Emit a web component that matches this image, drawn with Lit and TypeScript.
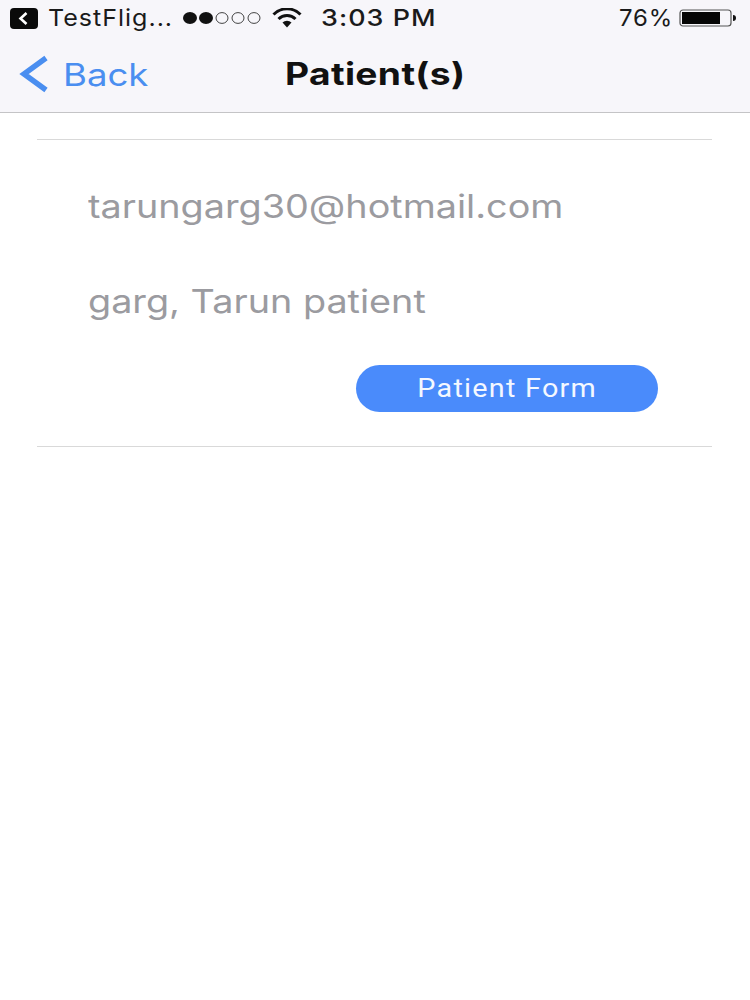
import { LitElement, html, css } from "lit";
import { customElement } from "lit/decorators.js";

@customElement("app-root")
export class AppRoot extends LitElement {
  static styles = css`
    :host { display: block; width: 750px; height: 1000px; background: #fff; font-family: "Inter", "Liberation Sans", sans-serif; overflow: hidden; }
    .top { background: #f7f6fa; height: 112px; border-bottom: 1px solid #c4c4c6; box-sizing: content-box; }
    .status { height: 36px; display: flex; align-items: center; padding: 0 13px 0 10px; color: #1a1a1a; font-size: 23px; letter-spacing: 0.9px; }
    .app { width: 28px; height: 21px; display: block; margin-right: 10px; }
    .carrier { width: 126px; white-space: nowrap; transform: scaleX(1.09); transform-origin: left center; }
    .dots { width: 80px; height: 14px; display: block; margin-left: 9px; }
    .wifi { width: 30px; height: 20px; display: block; margin-left: 9px; }
    .time { margin-left: 19px; font-weight: 500; transform: scaleX(1.17); transform-origin: left center; }
    .right { margin-left: auto; display: flex; align-items: center; gap: 8px; }
    .pct { transform: scaleX(1.04); transform-origin: left center; }
    .batt { width: 58px; height: 20px; display: block; }
    .nav { height: 76px; display: grid; grid-template-columns: 1fr auto 1fr; align-items: center; padding: 0 19px; }
    .back { display: flex; align-items: center; gap: 14px; color: #4a8ef0; font-size: 31px; }
    .back span { transform: scaleX(1.18); transform-origin: left center; }
    .chev { width: 30px; height: 38px; display: block; }
    .title { font-size: 31px; font-weight: 700; color: #111; letter-spacing: 0.3px; transform: scaleX(1.2); margin-top: -2px; }
    .card { margin: 26px 38px 0 37px; border-top: 1px solid #d9d9d9; border-bottom: 1px solid #d9d9d9; height: 308px; padding: 0 54px 0 51px; box-sizing: border-box; display: flex; flex-direction: column; }
    .line { font-size: 32px; color: #9b9ba0; line-height: 40px; transform: scaleX(1.18); transform-origin: left center; white-space: nowrap; }
    .email { margin-top: 47px; }
    .name { margin-top: 55px; }
    .btn { align-self: flex-end; margin-top: 43px; width: 302px; height: 47px; border-radius: 24px; background: #4a8bfb; color: #f4f8ff; font-family: "Roboto", "Inter", sans-serif; font-size: 25px; letter-spacing: 1.1px; display: flex; align-items: center; justify-content: center; border: 0; padding: 0; }
    .btn span { transform: scaleX(1.15); }
  `;

  render() {
    return html`
      <div class="top">
        <div class="status">
          <svg class="app" viewBox="0 0 28 21">
            <rect width="28" height="21" rx="4" fill="#0a0a0a"/>
            <path d="M16.5 5 L10.5 10.5 L16.5 16" fill="none" stroke="#fff" stroke-width="2.6"/>
          </svg>
          <span class="carrier">TestFlig...</span>
          <svg class="dots" viewBox="0 0 80 14">
            <ellipse cx="7" cy="7" rx="7" ry="6" fill="#111"/>
            <ellipse cx="23" cy="7" rx="7" ry="6" fill="#111"/>
            <ellipse cx="39" cy="7" rx="6" ry="5.4" fill="none" stroke="#444" stroke-width="1"/>
            <ellipse cx="55" cy="7" rx="6" ry="5.4" fill="none" stroke="#444" stroke-width="1"/>
            <ellipse cx="71" cy="7" rx="6" ry="5.4" fill="none" stroke="#444" stroke-width="1"/>
          </svg>
          <svg class="wifi" viewBox="0 0 30 20">
            <path d="M1.5 6.5 A19 19 0 0 1 28.5 6.5" fill="none" stroke="#111" stroke-width="3"/>
            <path d="M6.5 11 A12 12 0 0 1 23.5 11" fill="none" stroke="#111" stroke-width="3"/>
            <path d="M10.5 14.5 A6.5 6.5 0 0 1 19.5 14.5 L15 19.5 Z" fill="#111"/>
          </svg>
          <span class="time">3:03 PM</span>
          <div class="right">
            <span class="pct">76%</span>
            <svg class="batt" viewBox="0 0 58 20">
              <rect x="1" y="2" width="51" height="16" rx="3" fill="none" stroke="#555" stroke-width="1.2"/>
              <rect x="3" y="4" width="38" height="12" fill="#050505"/>
              <path d="M54 7 A3 3 0 0 1 54 13 Z" fill="#111"/>
            </svg>
          </div>
        </div>
        <div class="nav">
          <div class="back">
            <svg class="chev" viewBox="0 0 30 38">
              <path d="M27 3 L5 19 L27 35" fill="none" stroke="#4a8ef0" stroke-width="5.5"/>
            </svg>
            <span>Back</span>
          </div>
          <div class="title">Patient(s)</div>
          <div></div>
        </div>
      </div>
      <div class="card">
        <div class="line email">tarungarg30@hotmail.com</div>
        <div class="line name">garg, Tarun patient</div>
        <button class="btn"><span>Patient Form</span></button>
      </div>
    `;
  }
}
